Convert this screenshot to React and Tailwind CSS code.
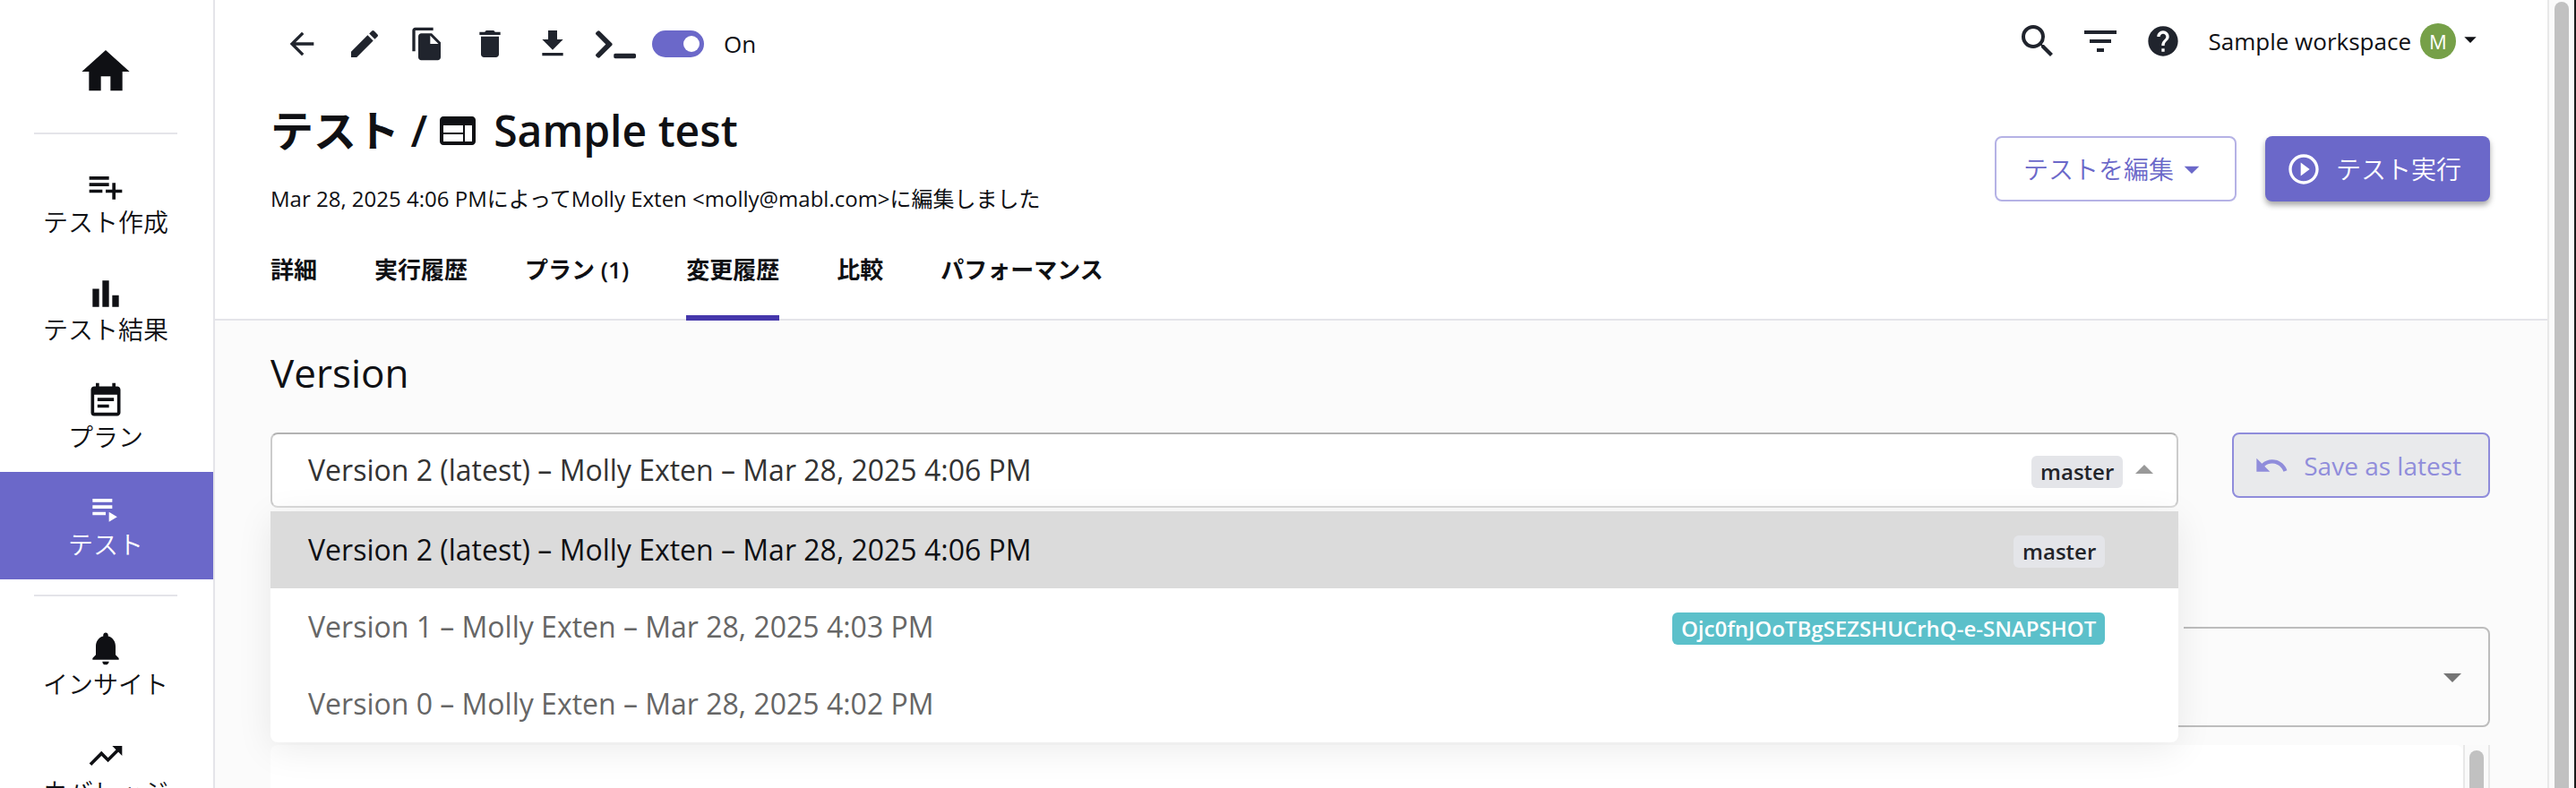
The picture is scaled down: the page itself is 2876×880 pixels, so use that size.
import { useState } from "react";
import {
  MdArrowBack,
  MdArrowDropDown,
  MdBarChart,
  MdDelete,
  MdEdit,
  MdEventNote,
  MdFileCopy,
  MdFilterList,
  MdGetApp,
  MdHelp,
  MdHome,
  MdNotifications,
  MdPlayCircleOutline,
  MdSearch,
  MdTrendingUp,
  MdUndo,
  MdWeb,
} from "react-icons/md";
import { FaTerminal } from "react-icons/fa";

const PlaylistAddIcon = () => (
  <svg viewBox="0 0 24 24" width="44" height="44" fill="currentColor">
    <path d="M14 10H2v2h12v-2zm0-4H2v2h12V6zm4 8v-4h-2v4h-4v2h4v4h2v-4h4v-2h-4zM2 16h8v-2H2v2z" />
  </svg>
);

const PlaylistPlayIcon = () => (
  <svg viewBox="0 0 24 24" width="44" height="44" fill="currentColor">
    <path d="M4 10h12v2H4zm0-4h12v2H4zm0 8h8v2H4zm10 0v6l5-3z" />
  </svg>
);

const mainNav = [
  { label: "テスト作成", icon: <PlaylistAddIcon /> },
  { label: "テスト結果", icon: <MdBarChart size={44} /> },
  { label: "プラン", icon: <MdEventNote size={44} /> },
  { label: "テスト", icon: <PlaylistPlayIcon />, active: true },
];

const insightNav = [
  { label: "インサイト", icon: <MdNotifications size={44} /> },
  { label: "カバレッジ", icon: <MdTrendingUp size={44} /> },
];

const tools = [
  { label: "Back", icon: <MdArrowBack size={40} /> },
  { label: "Edit", icon: <MdEdit size={40} /> },
  { label: "Copy", icon: <MdFileCopy size={40} /> },
  { label: "Delete", icon: <MdDelete size={40} /> },
  { label: "Download", icon: <MdGetApp size={40} /> },
  { label: "Command line", icon: <FaTerminal size={45} /> },
];

const headerTools = [
  { label: "Search", icon: <MdSearch size={48} /> },
  { label: "Filter", icon: <MdFilterList size={48} /> },
  { label: "Help", icon: <MdHelp size={40} /> },
];

const tabs = ["詳細", "実行履歴", "プラン (1)", "変更履歴", "比較", "パフォーマンス"];

const versions = [
  { id: 2, label: "Version 2 (latest) – Molly Exten – Mar 28, 2025 4:06 PM", tag: "master" },
  {
    id: 1,
    label: "Version 1 – Molly Exten – Mar 28, 2025 4:03 PM",
    tag: "Ojc0fnJOoTBgSEZSHUCrhQ-e-SNAPSHOT",
    snapshot: true,
  },
  { id: 0, label: "Version 0 – Molly Exten – Mar 28, 2025 4:02 PM" },
];

const NavItem = ({ item }) => (
  <a
    href="#"
    className={`flex h-[120px] flex-col items-center pt-[19px] pr-[2px] text-[28px] leading-9 font-[350] whitespace-nowrap ${
      item.active ? "bg-[#6b68c9] text-white" : "text-[#0f1014]"
    }`}
  >
    {item.icon}
    {item.label}
  </a>
);

const Divider = () => <hr className="ml-[38px] w-40 border-t-2 border-[#e4e4e9]" />;

const Tag = ({ version }) => (
  <span
    className={`mt-1 flex h-9 items-center rounded-md px-[10px] text-2xl font-semibold ${
      version.snapshot ? "bg-[#5bc0ca] text-white" : "bg-[#e4e5e9] text-[#222429]"
    }`}
  >
    {version.tag}
  </span>
);

const Sidebar = () => (
  <nav className="w-60 shrink-0 overflow-hidden border-r-2 border-[#e4e4e9] bg-white">
    <a href="#" aria-label="Home" className="flex h-[148px] justify-center pt-12 pr-[2px] text-[#0f1014]">
      <MdHome size={64} />
    </a>
    <Divider />
    <div className="my-[17px]">
      {mainNav.map((item) => (
        <NavItem key={item.label} item={item} />
      ))}
    </div>
    <Divider />
    <div className="my-[17px]">
      {insightNav.map((item) => (
        <NavItem key={item.label} item={item} />
      ))}
    </div>
  </nav>
);

const Header = () => {
  const [enabled, setEnabled] = useState(true);
  const [tab, setTab] = useState("変更履歴");

  return (
    <header className="flex justify-between border-b-2 border-[#e4e4e9] bg-white pr-16 pl-[62px]">
      <div>
        <div className="flex h-[98px] items-center text-[#20242d]">
          {tools.map((tool) => (
            <button key={tool.label} aria-label={tool.label} className="flex w-[70px] justify-center">
              {tool.icon}
            </button>
          ))}
          <label className="ml-[6px] flex items-center gap-[22px] text-[26px] text-[#0f1014]">
            <input
              type="checkbox"
              role="switch"
              checked={enabled}
              onChange={(e) => setEnabled(e.target.checked)}
              className="flex h-[30px] w-[58px] appearance-none items-center rounded-full bg-[#b9bac2] px-[5px] before:size-[18px] before:rounded-full before:bg-white checked:justify-end checked:bg-[#6b68c9]"
            />
            On
          </label>
        </div>

        <h1 className="mt-4 flex items-center text-5xl leading-[64px] font-semibold">
          テスト /
          <MdWeb size={48} className="mr-4 ml-[10px]" />
          Sample test
        </h1>
        <p className="mt-[26px] text-2xl leading-9">
          Mar 28, 2025 4:06 PMによってMolly Exten &lt;molly@mabl.com&gt;に編集しました
        </p>

        <div role="tablist" className="mt-[10px] -mb-[2px] flex gap-16">
          {tabs.map((name) => (
            <button
              key={name}
              role="tab"
              aria-selected={tab === name}
              onClick={() => setTab(name)}
              className={`h-[108px] border-b-6 text-[26px] font-semibold ${
                tab === name ? "border-[#4537ab]" : "border-transparent"
              }`}
            >
              {name}
            </button>
          ))}
        </div>
      </div>

      <div className="flex flex-col items-end">
        <div className="flex h-[92px] items-center pr-[6px] text-[#20242d]">
          {headerTools.map((tool) => (
            <button key={tool.label} aria-label={tool.label} className="flex w-[70px] justify-center">
              {tool.icon}
            </button>
          ))}
          <button className="ml-4 flex items-center text-[26px] text-[#0f1014]">
            Sample workspace
            <span className="ml-[10px] flex size-10 items-center justify-center rounded-full bg-[#76a048] text-[22px] text-white">
              M
            </span>
            <MdArrowDropDown size={32} className="mb-1" />
          </button>
        </div>
        <div className="mt-[60px] flex gap-8 text-[28px] font-[350]">
          <button className="flex h-[73px] items-center rounded-lg border-2 border-[#b5b2e5] pr-7 pl-[30px] text-[#6b68c9]">
            テストを編集
            <MdArrowDropDown size={40} />
          </button>
          <button className="flex h-[73px] items-center gap-4 rounded-lg bg-[#6b68c9] pr-8 pl-[23px] text-white shadow-[0_4px_6px_rgba(0,0,0,0.35)]">
            <MdPlayCircleOutline size={40} />
            テスト実行
          </button>
        </div>
      </div>
    </header>
  );
};

const VersionSelect = () => {
  const [open, setOpen] = useState(true);
  const [selected, setSelected] = useState(versions[0]);

  const handleSelect = (version) => {
    setSelected(version);
    setOpen(false);
  };

  return (
    <div className="relative flex-1 text-[32px]">
      <button
        aria-haspopup="listbox"
        aria-expanded={open}
        aria-labelledby="version-heading"
        onClick={() => setOpen(!open)}
        className="flex h-[84px] w-full items-center justify-between rounded-lg border-2 border-t-[#b3b3b3] border-r-[#cccccc] border-b-[#d9d9d9] border-l-[#cccccc] bg-white pr-3 pl-10 text-[#333333]"
      >
        {selected.label}
        <span className="flex items-center">
          {selected.tag && <Tag version={selected} />}
          <MdArrowDropDown size={48} className="rotate-180 text-[#999999]" />
        </span>
      </button>
      {open && (
        <ul
          role="listbox"
          aria-labelledby="version-heading"
          className="absolute inset-x-0 top-full mt-1 overflow-hidden rounded-b-lg bg-white shadow-[0_8px_40px_rgba(0,0,0,0.08)]"
        >
          {versions.map((version) => (
            <li
              key={version.id}
              role="option"
              aria-selected={version.id === selected.id}
              onClick={() => handleSelect(version)}
              className={`flex h-[86px] items-center justify-between pr-[82px] pl-[42px] ${
                version.id === selected.id ? "bg-[#dbdbdb] text-[#0f1014]" : "text-[#666666]"
              }`}
            >
              {version.label}
              {version.tag && <Tag version={version} />}
            </li>
          ))}
        </ul>
      )}
    </div>
  );
};

const App = () => {
  return (
    <div className="flex h-screen overflow-hidden bg-[#fbfbfb] font-['Open_Sans','Noto_Sans_CJK_JP',sans-serif] text-[#0f1014]">
      <Sidebar />

      <div className="flex min-w-0 flex-1 flex-col">
        <Header />

        <main className="flex flex-1 flex-col pt-7 pr-16 pl-[62px]">
          <h2 id="version-heading" className="text-[44px] leading-[60px]">
            Version
          </h2>
          <div className="relative z-10 mt-[37px] flex gap-[60px]">
            <VersionSelect />
            <button
              disabled
              className="flex h-[73px] items-center gap-4 rounded-lg border-2 border-[#8f8cdb] bg-[#e9eaec] pr-[30px] pl-[22px] text-[28px] text-[#908ddb]"
            >
              <MdUndo size={40} />
              Save as latest
            </button>
          </div>

          <fieldset className="mt-[133px] rounded-lg border-2 border-[#bdbdbd]">
            <legend className="h-[2px] w-[calc(86%+6px)]" />
            <div className="flex h-[108px] items-center pr-4">
              <select aria-label="Compare with" className="h-full flex-1 appearance-none bg-transparent" />
              <MdArrowDropDown size={48} className="text-[#757575]" />
            </div>
          </fieldset>

          <section className="mt-5 flex flex-1">
            <div className="flex-1 rounded-t-lg bg-white" />
            <div className="flex w-[30px] justify-center border-x-2 border-[#e8e8e8] bg-[#fafafa] pt-[6px]">
              <div className="w-4 rounded-t-full bg-[#c1c1c1]" />
            </div>
          </section>
        </main>
      </div>

      <div className="flex w-8 justify-center border-r-2 border-l-2 border-r-[#1a1a1a] border-l-[#e8e8e8] bg-[#fafafa] pt-[2px]">
        <div className="w-4 rounded-t-full bg-[#c1c1c1]" />
      </div>
    </div>
  );
};

export default App;
